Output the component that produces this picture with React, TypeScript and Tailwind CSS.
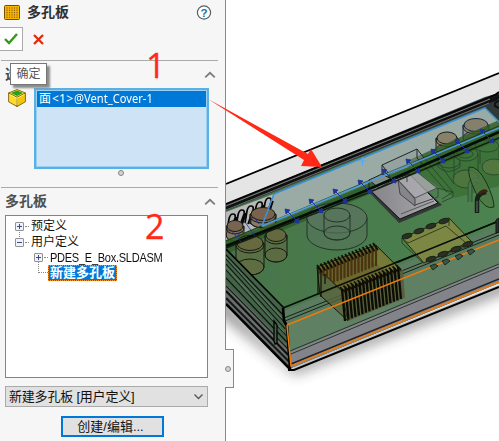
import React from "react";

const SANS = "font-['Liberation_Sans','Noto_Sans_CJK_SC',sans-serif]";
const NOTO = "font-['Noto_Sans','Noto_Sans_CJK_SC',sans-serif]";

type P = [number, number];

function Chevron() {
  return (
    <svg width="12" height="8" viewBox="0 0 12 8" fill="none" stroke="#7b7b7b" strokeWidth="1.8">
      <path d="M1.2 6.3 6 1.8l4.8 4.5" />
    </svg>
  );
}

function Grip() {
  return <span className="block h-[6px] w-[6px] rounded-full border border-[#858585] bg-[#d2d2d2]" />;
}

function PlateIcon() {
  return (
    <svg width="16" height="15" viewBox="0 0 16 15">
      <rect x=".5" y=".5" width="15" height="14" rx="1" fill="#f8b800" stroke="#7a4b00" />
      {[3, 5.5, 8, 10.5, 13].map((x) =>
        [3, 5.3, 7.6, 9.9, 12.2].map((y) => <rect key={`${x}-${y}`} x={x - 0.6} y={y - 0.6} width="1.2" height="1.2" fill="#8a5a00" />)
      )}
    </svg>
  );
}

function CubeIcon() {
  return (
    <svg width="18" height="18" viewBox="0 0 18 18" strokeLinejoin="round">
      <g stroke="#7d6100" strokeWidth=".9">
        <path d="M.6 4v8.8l8.4 4.7V8.2z" fill="#ffdc2c" />
        <path d="M9 8.2v9.3l8.4-4.7V4z" fill="#f2c40c" />
        <path d="M.6 4 9 .5 17.4 4 9 8.2z" fill="#ffe640" />
      </g>
      <path d="M3 4 9 1.4 15 4 9 6.9z" fill="#21a321" />
      <path d="M1.6 5.4 9 9.2l7.4-3.8M9 9.2v7" stroke="#fff3a0" fill="none" strokeWidth=".9" />
    </svg>
  );
}

function Expander({ open }: { open?: boolean }) {
  return (
    <svg width="9" height="9" viewBox="0 0 9 9" className="shrink-0">
      <rect x=".5" y=".5" width="8" height="8" rx=".5" fill="#f2f2f2" stroke="#929292" />
      <path d="M2 4.5h5" stroke="#28529c" />
      {!open && <path d="M4.5 2v5" stroke="#28529c" />}
    </svg>
  );
}

function Branch() {
  return <i className="mx-px w-[4px] border-t border-dotted border-[#888]" />;
}

function Can({ x, y, rx, ry, h, fill, line = "#171b12" }: { x: number; y: number; rx: number; ry: number; h: number; fill: string; line?: string }) {
  return (
    <g stroke={line} strokeWidth="1" fill={fill}>
      <path d={`M${x - rx} ${y}v${h}a${rx} ${ry} 0 0 0 ${2 * rx} 0V${y}`} fillOpacity=".55" />
      <ellipse cx={x} cy={y + h} rx={rx} ry={ry} fillOpacity=".45" />
      <ellipse cx={x} cy={y + 2} rx={rx} ry={ry} fillOpacity=".5" />
      <ellipse cx={x} cy={y} rx={rx - 1} ry={ry - 0.5} />
    </g>
  );
}

function Model() {
  const markers: P[] = [[292, 216], [316, 206], [340, 196], [365, 187], [389, 176], [413, 166], [438, 156], [462, 146], [487, 136]];
  return (
    <svg width="273" height="441" viewBox="226 0 273 441" className="block">
      <defs>
        <filter id="soft" x="-20%" y="-30%" width="140%" height="160%"><feGaussianBlur stdDeviation="7" /></filter>
        <linearGradient id="board" x1="0" y1="0" x2="1" y2="0"><stop offset="0" stopColor="#477449" /><stop offset="1" stopColor="#4c8350" /></linearGradient>
        <linearGradient id="chip" x1="0" y1="0" x2="1" y2="0"><stop offset="0" stopColor="#828287" /><stop offset="1" stopColor="#aaaaaf" /></linearGradient>
      </defs>
      <rect x="226" width="273" height="441" fill="#fff" />
      <polygon points="210,285 290,366 520,274 520,286 294,374 210,306" fill="#333" opacity=".6" filter="url(#soft)" />
      <polygon points="226,184 499,73 499,285 291,368 226,304" fill="#e5e5e5" />
      <polygon points="226,204 485,97 499,93 499,283 291,368 226,304" fill="#30383a" />
      <polygon points="226,211 485,107 499,121 499,241 284,311 226,253" fill="url(#board)" />
      <polygon points="226,212 274,194 262,226 226,242" fill="#b8baba" />
      <polygon points="274,194 485,108 499,122 499,130 262,226" fill="#9aaba5" />
      <path d="M226 184 499 73" stroke="#000" strokeWidth="1.7" />
      <path d="M226 204 490 97q5-1 9-5" fill="none" stroke="#000" strokeWidth="1.8" />
      <path d="M226 208 491 100q6-1 8-5" fill="none" stroke="#111" strokeWidth="4.5" />
      <path d="M226 206 490 99" stroke="#8d9090" strokeWidth=".9" />
      <path d="M226 210 489 103" stroke="#7c8282" strokeWidth=".8" />
      <path d="M499 101q-5 1-4 5l4 2" fill="none" stroke="#111" strokeWidth="2" />

      {/* Side vents */}
      <g stroke="#060606" fill="none">
        {[231, 240, 249, 258, 267].map((x, i) => {
          const y = 231 - i * 4;
          return <path key={x} d={`M${x - 4} ${y}l2-12q1-5 4-5t2 4l-5 14M${x + 1} ${y + 1}l5-15`} strokeWidth="1.7" />;
        })}
      </g>
      <Can x={263} y={214} rx={13} ry={7} h={7} fill="#79634d" />
      <Can x={235} y={226} rx={9} ry={6} h={9} fill="#786450" />
      <Can x={447} y={138} rx={11} ry={6.5} h={12} fill="#888169" />
      <Can x={476} y={125} rx={13} ry={7} h={13} fill="#85806b" line="#172537" />
      <path d="M274 194 262 226 499 128" fill="none" stroke="#4d9cdf" />

      <polygon points="226,240 262,228 499,130 499,140 226,254" fill="#315f2b" opacity=".88" />
      <polygon points="407,166 499,128 499,186 455,198" fill="#356a2e" opacity=".65" />
      <polygon points="409,160 499,120 499,130 412,166" fill="#2f5a24" opacity=".8" />
      <path d="M226 241 499 126" stroke="#1d421b" strokeWidth="1.2" />

      {/* Components on the board */}
      <Can x={250} y={243} rx={14} ry={8} h={24} fill="#676a40" />
      <Can x={276} y={235} rx={11} ry={7} h={20} fill="#646940" />
      <g stroke="#233526" fill="#57755b" strokeWidth="1">
        <path d="M307 218v17a30 15 0 0 0 60 0v-17" fillOpacity=".6" />
        <ellipse cx="337" cy="218" rx="30" ry="15" />
        <path d="M324 215v18a13 7 0 0 0 26 0v-18" fillOpacity=".5" />
        <ellipse cx="337" cy="233" rx="13" ry="7" fillOpacity=".3" />
        <ellipse cx="337" cy="215" rx="13" ry="7" fillOpacity=".5" />
      </g>

      {/* Power module: base plate, raised block and clear housing */}
      <polygon points="366,189 409,173 442,205 399,223" fill="#343737" />
      <polygon points="369,189 409,174 438,203 400,219" fill="url(#chip)" stroke="#111" />
      <path d="M401 214 434 201" stroke="#55575a" />
      <polygon points="398,180 415,199 415,206 400,194" fill="#85858a" stroke="#333" strokeWidth=".8" />
      <polygon points="398,180 417,172 437,188 415,198" fill="#aaaaae" fillOpacity=".8" stroke="#3f4244" strokeWidth=".8" />
      <path d="M415 205 438 197V188" fill="none" stroke="#444" />
      <g fill="none" stroke="#202623">
        <polygon points="382,165 417,149 424,158 389,174" fill="#8e9998" fillOpacity=".4" />
        <path d="M382 165v9l7 8V174M417 149v9l7 8" />
        <path d="M369 180 382 174 393 180 379 188zM369 180v8" fill="#858d89" />
      </g>
      <g fill="none" stroke="#27472c" strokeWidth=".9">
        <path d="M424 158 453 192 442 199M424 166 447 192M437 188l16 4v5l-11 5M407 173l30-13 17 24M407 173v9" />
        <ellipse cx="449" cy="162" rx="11" ry="6" /><ellipse cx="466" cy="154" rx="12" ry="7" />
        <path d="M438 162v5q10 9 22 0v-5M454 154v24M478 154v24" />
        <ellipse cx="465" cy="154" rx="8" ry="4" />
        <ellipse cx="466" cy="179" rx="13" ry="9" fill="#677b43" fillOpacity=".4" />
        <ellipse cx="487" cy="146" rx="12" ry="6" /><path d="M480 150v14M499 150v12" />
        <ellipse cx="494" cy="167" rx="12" ry="8" fill="#718045" fillOpacity=".4" />
      </g>
      <path d="M470 202v-15q0-6 5-7l5 1" fill="none" stroke="#355b38" strokeWidth="5" />
      <path d="M470 202v-15q0-6 5-7l5 1" fill="none" stroke="#4b774c" strokeWidth="2.6" />
      <path d="M469 167q9-1 17 15t8 25q-9 4-18-14t-7-26Z" fill="#4f7743" fillOpacity=".75" stroke="#15351a" />
      <path d="M477 213v-13q0-4 5-7l4-1" fill="none" stroke="#172019" strokeWidth="4.5" />
      <path d="M477 212v-11" stroke="#596b58" strokeWidth="1.2" />
      <path d="M479 194q5-5 8-2" stroke="#3a2413" strokeWidth="3" fill="none" />

      {/* Cover edge over the parts */}
      <path d="M226 248 365 194 499 138" fill="none" stroke="#10200f" strokeWidth="1.4" />
      <path d="M226 246 262 232 365 191 499 132" fill="none" stroke="#050c06" strokeWidth="2.6" />
      <path d="M262 226 274 194 485 108 499 122" fill="none" stroke="#3b8fdc" strokeWidth="1.4" />
      <path d="M262 226 499 128" stroke="#4d9cdf" strokeWidth="1.6" />

      {/* Front panel and its edges */}
      <polygon points="283,311 499,226 499,242 287,325" fill="#5b7c60" />
      <polygon points="287,325 499,240 499,283 291,368" fill="#5f8063" />
      <polygon points="290,352 499,264 499,283 291,368" fill="#838489" />
      <path d="M283 308 499 221" stroke="#050c07" strokeWidth="1.5" />
      <path d="M284 318 499 232M285 321 499 235" stroke="#14231a" strokeWidth="1" />
      <path d="M290 351 499 264M291 354 499 267" stroke="#29332b" strokeWidth="1" />
      <path d="M291 364 499 279" stroke="#202326" strokeWidth="1.5" />
      <path d="M288 370h6L499 287" fill="none" stroke="#000" strokeWidth="2" />

      <polygon points="226,249 283,308 291,368 226,304" fill="#456349" />
      <polygon points="226,284 286,345 290,367 226,305" fill="#6c6d6d" />
      <path d="M226 249 284 308" stroke="#000" strokeWidth="1.6" />
      {[255, 259, 264, 270, 278, 286, 291, 298].map((y, i) => (
        <path key={y} d={`M226 ${y}L${284 + i * 0.7} ${316 + i * 6.5}`} stroke={i % 2 ? "#111a13" : "#0b0f0d"} strokeWidth={i > 5 ? 2.1 : 1.1} />
      ))}
      <path d="M226 257 283 319M226 267 284 332" stroke="#68906a" strokeWidth=".7" />
      <path d="M226 304 290 369M283 308l1 13 3 5 3 43" fill="none" stroke="#000" strokeWidth="2.6" />
      <path d="M274 321l3 4v18l-2 1-1-3z" fill="#456349" stroke="#000" strokeWidth="1.3" />

      {/* Heat sink */}
      <polygon points="317,267 342,291 348,321 320,295" fill="#59643b" fillOpacity=".8" stroke="#15180c" />
      <polygon points="317,267 376,245 401,270 342,291" fill="#6b6830" stroke="#202111" />
      <polygon points="376,247 400,270 392,273 372,262" fill="#747a38" />
      <polygon points="342,291 403,270 405,298 348,321" fill="#585a36" fillOpacity=".85" />
      {Array.from({ length: 17 }, (_, i) => {
        const x = 318 + i * 3.5;
        const y = 266 - i * 1.38;
        return (
          <g key={i}>
            <path d={`M${x + 2} ${y + 2}v${i < 5 ? 6 + i * 3.5 : 20}`} stroke="#4a3310" strokeWidth="2.2" />
            <path d={`M${x - 1} ${y - 1}l5 7`} stroke="#0e0f06" strokeWidth="1.8" />
            <path d={`M${x + 24} ${y + 23}l3 32`} stroke="#0c0c05" strokeWidth="2.3" />
            <path d={`M${x + 22} ${y + 21}l5 5`} stroke="#101006" strokeWidth="1.7" />
          </g>
        );
      })}
      <path d="M318 267v27M321 270v27M325 274v10" stroke="#101006" strokeWidth="1.2" />
      <path d="M320 293 400 261" stroke="#0a0e07" strokeWidth="1.4" />
      <path d="M287 325 499 240M287 325l4 41L499 282" fill="none" stroke="#ee7b0a" strokeWidth="1.5" />

      {/* Transformer */}
      <polygon points="402,238 449,218 471,241 424,263" fill="#7b8743" stroke="#202613" />
      <path d="M402 238v5l21 20 48-18v-4M408 243l38-17 20 17" fill="none" stroke="#343d1f" />
      <path d="M449 218v8M404 240l4 3" stroke="#343d1f" fill="none" />
      {[[407, 236], [419, 231], [431, 226], [444, 221], [431, 259], [443, 254], [456, 249], [468, 244]].map(([x, y], i) => (
        <g key={i} stroke="#17231a">
          <ellipse cx={x} cy={y} rx="5" ry="2.3" fill="#2b3020" transform={`rotate(-18 ${x} ${y})`} />
          {i > 3 && <path d={`M${x - 1} ${y + 7}l5-2 3 2-5 4z`} fill="#3a5640" strokeWidth=".9" />}
        </g>
      ))}
      <path d="M398 262 499 221" stroke="#080d08" strokeWidth="1.6" />
      <path d="M496 220l3-2v14l-3 1z" fill="#26342a" stroke="#111" />

      <g stroke="#1c349b" fill="#1c349b">
        {markers.map(([x, y]) => (
          <g key={x}>
            <path d={`M${x - 6} ${y - 6}l12 12`} strokeWidth="1" />
            <path d={`M${x - 7} ${y - 7}l5 1-4 4zM${x + 7} ${y + 7}l-5-1 4-4z`} strokeWidth=".8" />
          </g>
        ))}
        <path d="m245 222 10 14M231 230l10 12M254 217l5 7M239 232v5" fill="none" strokeWidth=".8" />
      </g>
      <path d="M359 161h7M362.5 157v8" stroke="#55a9f4" strokeWidth="1" />
    </svg>
  );
}

export default function App() {
  return (
    <main className={`relative flex h-[441px] w-[499px] overflow-hidden bg-white ${SANS} text-[12px] text-[#111]`}>
      <aside className="h-[441px] w-[226px] shrink-0 border-r border-[#888] bg-[#f6f6f6]">
        <header className="flex h-[27px] items-start pl-1 pt-[5px]">
          <PlateIcon />
          <h1 className="ml-[7px] mt-[-1px] text-[14px] font-bold leading-[16px] text-[#303030]">多孔板</h1>
          <svg className="ml-auto mr-[13px]" width="16" height="16" viewBox="0 0 16 16">
            <circle cx="8" cy="7.5" r="6.6" fill="#fff" stroke="#555f66" strokeWidth="1.2" />
            <text x="8" y="11.6" textAnchor="middle" fontSize="11.5" fontWeight="bold" fill="#20749f">?</text>
          </svg>
        </header>
        <div className="flex h-[33px] items-start">
          <div className="flex h-[24px] w-[23px] items-center justify-center border border-l-0 border-[#aaa] bg-white">
            <svg width="14" height="12" viewBox="0 0 14 12" fill="none" stroke="#329a19" strokeWidth="2.4"><path d="m1 6 4 4 8-9" /></svg>
          </div>
          <svg className="ml-[10px] mt-[7px]" width="11" height="11" viewBox="0 0 11 11" stroke="#e12a0d" strokeWidth="2.3"><path d="m1 1 9 9m0-9-9 9" /></svg>
        </div>
        <div className="ml-px h-px w-[217px] bg-[#aaa]" />
        <section className="h-[126px]">
          <div className="relative flex h-[27px] items-center pl-[5px] pr-[9px]">
            <h2 className="text-[14px] font-bold text-[#444]">选</h2>
            <span className="ml-auto"><Chevron /></span>
            <div className="absolute left-[10px] top-[2px] flex h-[22px] w-[37px] items-center justify-center border border-[#777] bg-white text-[12px] text-[#575757] shadow-[3px_3px_2px_#8b8b8b]">确定</div>
          </div>
          <div className="flex pl-2">
            <span className="pt-px"><CubeIcon /></span>
            <div className="ml-2 h-[81px] w-[175px] border-2 border-[#58b0e5] bg-[#cfe3f7] p-px ring-1 ring-inset ring-[#9bcff0]">
              <div className={`flex h-[16px] bg-[#0078d7] pl-[2px] leading-[15px] text-white ${NOTO} text-[12px] whitespace-nowrap`}>
                <span>面</span><span className="ml-px tracking-[.2px]">&lt;1&gt;</span><span className="ml-px origin-left scale-x-[.93]">@Vent_Cover-1</span>
              </div>
            </div>
          </div>
          <div className="ml-[118px] mt-[1px]"><Grip /></div>
        </section>
        <div className="ml-px h-px w-[217px] bg-[#aaa]" />
        <div className="flex h-[27px] items-center pl-[5px] pr-[9px]">
          <h2 className="text-[14px] font-bold text-[#505050]">多孔板</h2>
          <span className="ml-auto"><Chevron /></span>
        </div>
        <div className="ml-[5px] h-[163px] w-[203px] border border-[#83838a] bg-white pl-[9px] pt-[2px] leading-[16px]">
          <div className="flex h-[16px] items-center"><Expander /><Branch /><span className="ml-px">预定义</span></div>
          <div className="relative flex h-[16px] items-center"><i className="absolute left-[4px] top-[-4px] h-[7px] border-l border-dotted border-[#888]" /><Expander open /><Branch /><span className="ml-px">用户定义</span></div>
          <div className="ml-[19px] flex h-[15px] items-center"><Expander /><Branch /><span className="ml-px w-[112px] origin-left scale-x-[.92] whitespace-nowrap text-[12px] tracking-[-.3px]">PDES_E_Box.SLDASM</span></div>
          <div className="ml-[23px] flex h-[16px]"><i className="mt-[-3px] h-[11px] w-[10px] border-b border-l border-dotted border-[#888]" /><span className="flex h-[16px] w-[69px] items-center justify-center border border-dotted border-[#ff922b] bg-[#0078d7] pb-px text-[13px] font-bold leading-none text-white">新建多孔板</span></div>
        </div>
        <div className="ml-[5px] mt-2 flex h-[21px] w-[203px] items-center border border-[#aaa] bg-[#e1e1e1] pl-[3px] pr-[4px] text-[13px] tracking-[-.2px]">
          新建多孔板&nbsp;[用户定义]
          <svg className="ml-auto" width="9" height="6" viewBox="0 0 9 6" fill="none" stroke="#555" strokeWidth="1.3"><path d="m.5.5 4 4 4-4" /></svg>
        </div>
        <div className="ml-[61px] mt-[9px] flex h-[21px] w-[103px] items-center justify-center border-2 border-[#0078d7] bg-[#e1e1e1] pr-1 text-[13px]">创建/编辑...</div>
      </aside>
      <Model />
      <div className="absolute left-[225px] top-[349px] flex h-[39px] w-[9px] items-center border border-l-0 border-[#888] bg-[#f6f6f6]"><Grip /></div>
      <svg className="pointer-events-none absolute left-0 top-0" width="340" height="250" viewBox="0 0 340 250">
        <path d="M208 99 308 154 311 149 322 167 301 166 304 160z" fill="#ff2916" />
        <g className="font-['Open_Sans',sans-serif]" fill="#ff2916" stroke="#ff2916" strokeWidth=".3" fontSize="34"><text x="146" y="78">1</text><text x="145" y="239">2</text></g>
      </svg>
    </main>
  );
}
